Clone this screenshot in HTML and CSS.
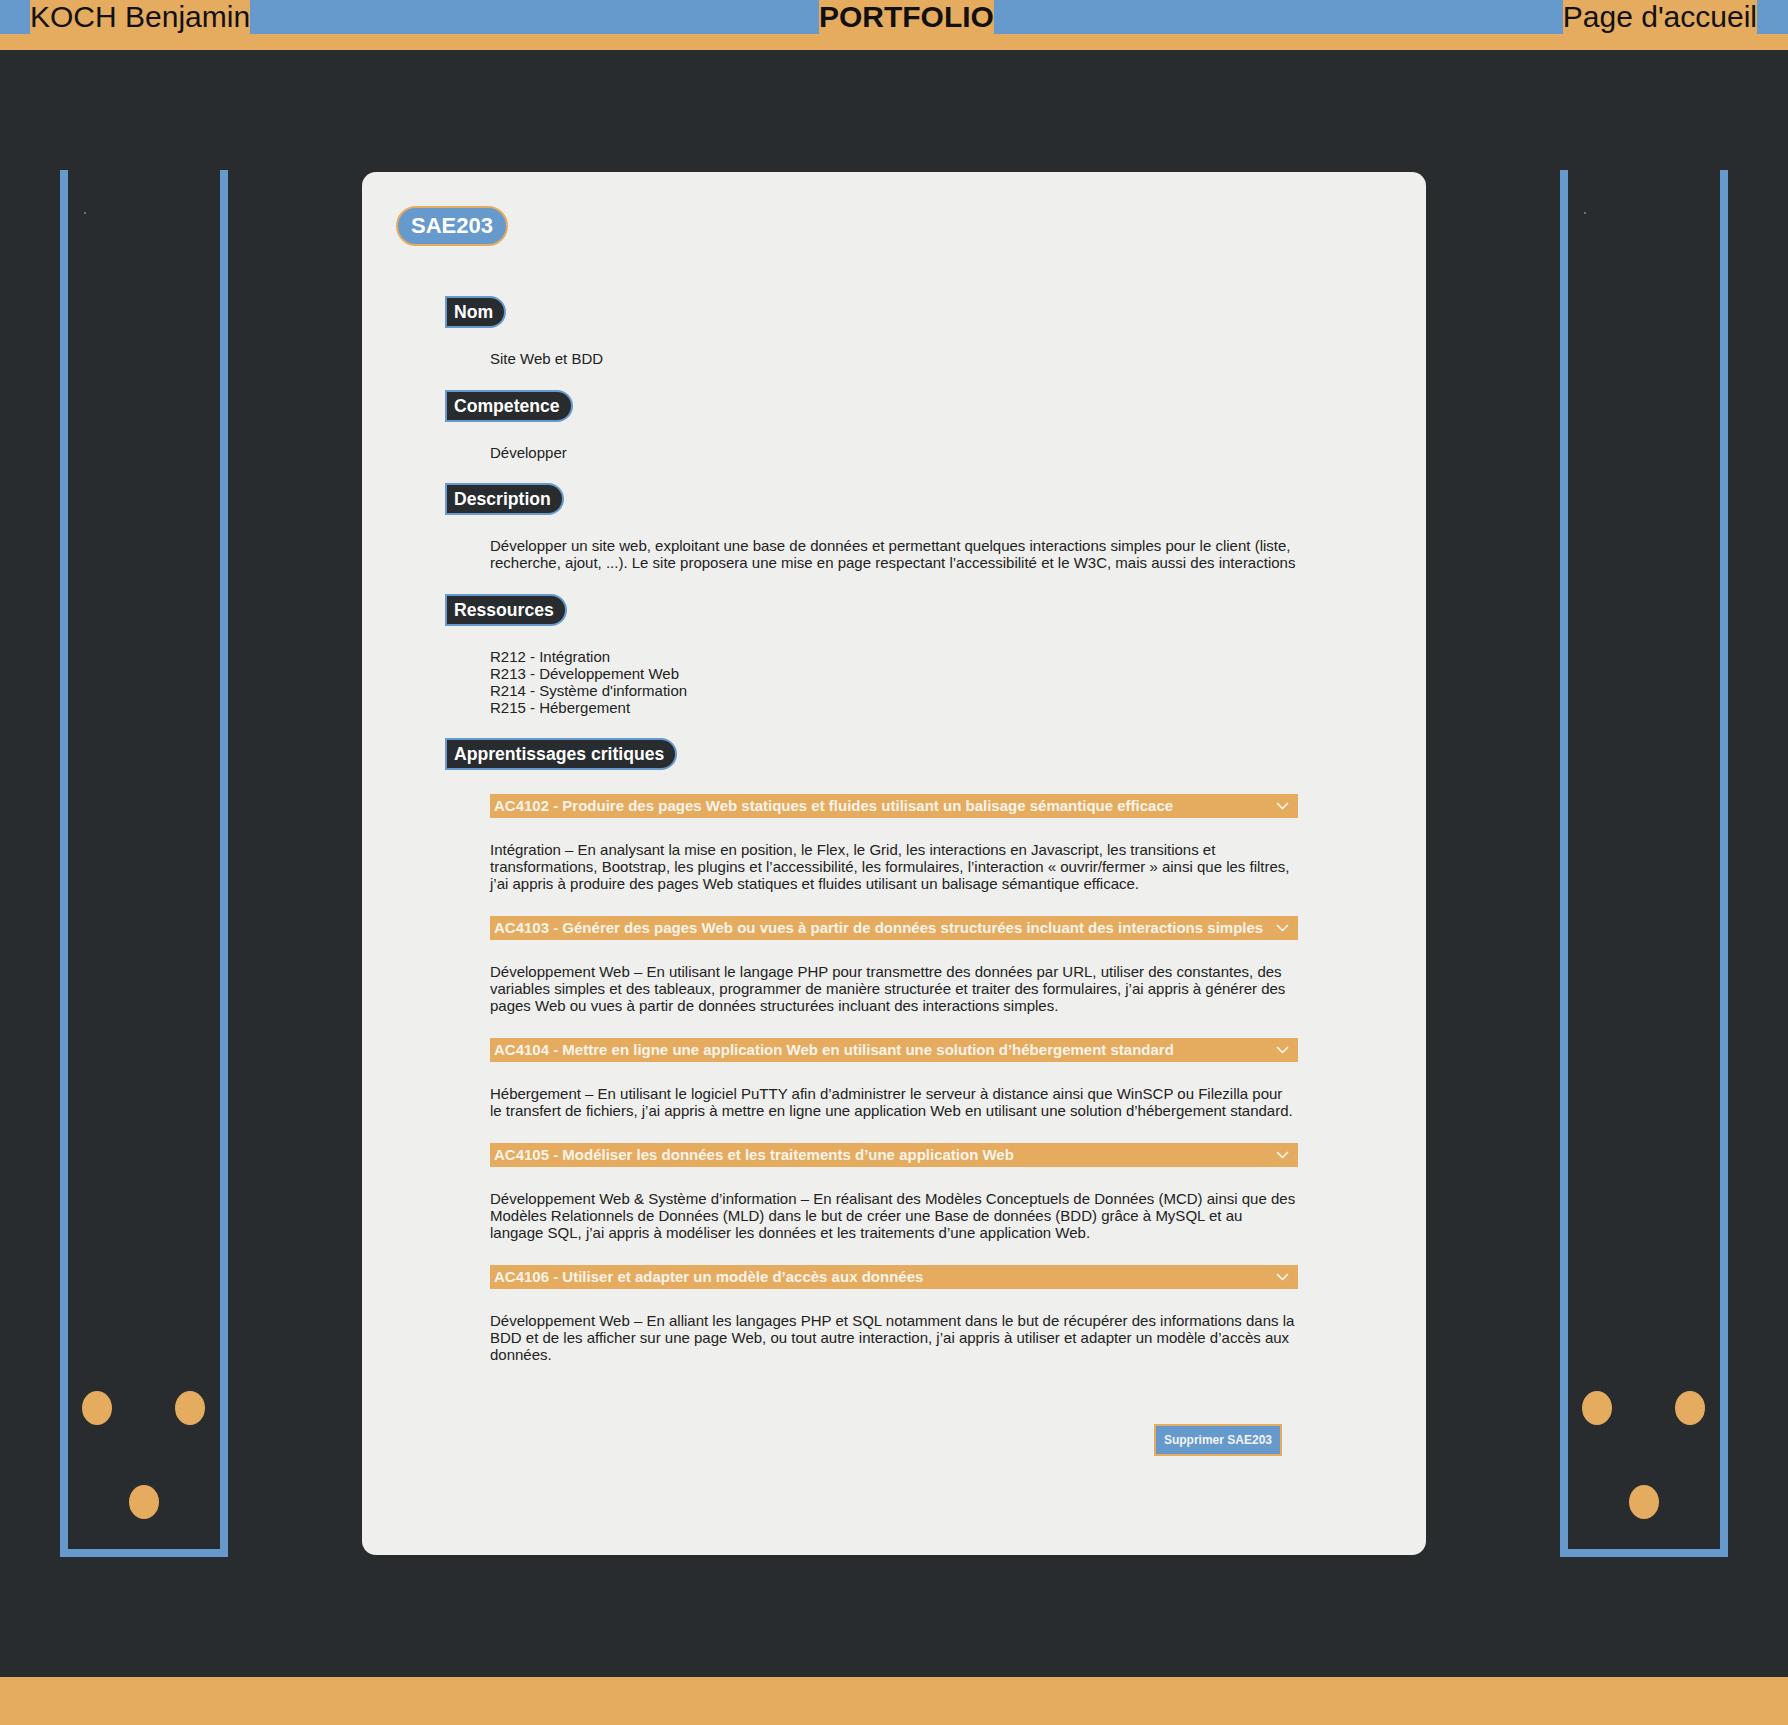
FILE: index.html
```html
<!DOCTYPE html>
<html lang="fr">
<head>
<meta charset="utf-8">
<title>PORTFOLIO - SAE203</title>
<link rel="stylesheet" href="styles.css">
</head>
<body>
<header class="topbar">
  <span class="nav-item">KOCH Benjamin</span>
  <h1 class="nav-item nav-title">PORTFOLIO</h1>
  <a class="nav-item" href="#">Page d'accueil</a>
</header>

<main class="stage">
  <aside class="deco">
    <span class="deco-dot"></span>
    <div class="deco-lights">
      <div class="deco-row"><span class="lamp"></span><span class="lamp"></span></div>
      <div class="deco-row deco-row-single"><span class="lamp"></span></div>
    </div>
  </aside>

  <article class="card">
    <h2 class="pill">SAE203</h2>

    <div class="sections">
      <h3 class="label">Nom</h3>
      <p class="content">Site Web et BDD</p>

      <h3 class="label">Competence</h3>
      <p class="content">Développer</p>

      <h3 class="label">Description</h3>
      <p class="content">Développer un site web, exploitant une base de données et permettant quelques interactions simples pour le client (liste, recherche, ajout, ...). Le site proposera une mise en page respectant l’accessibilité et le W3C, mais aussi des interactions</p>

      <h3 class="label">Ressources</h3>
      <p class="content">R212 - Intégration<br>R213 - Développement Web<br>R214 - Système d'information<br>R215 - Hébergement</p>

      <h3 class="label">Apprentissages critiques</h3>
      <div class="content ac-list">
        <details class="ac" open>
          <summary class="ac-head"><span>AC4102 - Produire des pages Web statiques et fluides utilisant un balisage sémantique efficace</span><svg class="chev" width="13" height="8" viewBox="0 0 13 8"><polyline points="1,1 6.5,6.5 12,1" fill="none" stroke="#fff" stroke-width="1.4"/></svg></summary>
          <p class="ac-text">Intégration – En analysant la mise en position, le Flex, le Grid, les interactions en Javascript, les transitions et transformations, Bootstrap, les plugins et l’accessibilité, les formulaires, l’interaction « ouvrir/fermer » ainsi que les filtres, j’ai appris à produire des pages Web statiques et fluides utilisant un balisage sémantique efficace.</p>
        </details>
        <details class="ac" open>
          <summary class="ac-head"><span>AC4103 - Générer des pages Web ou vues à partir de données structurées incluant des interactions simples</span><svg class="chev" width="13" height="8" viewBox="0 0 13 8"><polyline points="1,1 6.5,6.5 12,1" fill="none" stroke="#fff" stroke-width="1.4"/></svg></summary>
          <p class="ac-text">Développement Web – En utilisant le langage PHP pour transmettre des données par URL, utiliser des constantes, des variables simples et des tableaux, programmer de manière structurée et traiter des formulaires, j’ai appris à générer des pages Web ou vues à partir de données structurées incluant des interactions simples.</p>
        </details>
        <details class="ac" open>
          <summary class="ac-head"><span>AC4104 - Mettre en ligne une application Web en utilisant une solution d’hébergement standard</span><svg class="chev" width="13" height="8" viewBox="0 0 13 8"><polyline points="1,1 6.5,6.5 12,1" fill="none" stroke="#fff" stroke-width="1.4"/></svg></summary>
          <p class="ac-text">Hébergement – En utilisant le logiciel PuTTY afin d’administrer le serveur à distance ainsi que WinSCP ou Filezilla pour le transfert de fichiers, j’ai appris à mettre en ligne une application Web en utilisant une solution d’hébergement standard.</p>
        </details>
        <details class="ac" open>
          <summary class="ac-head"><span>AC4105 - Modéliser les données et les traitements d’une application Web</span><svg class="chev" width="13" height="8" viewBox="0 0 13 8"><polyline points="1,1 6.5,6.5 12,1" fill="none" stroke="#fff" stroke-width="1.4"/></svg></summary>
          <p class="ac-text">Développement Web &amp; Système d’information – En réalisant des Modèles Conceptuels de Données (MCD) ainsi que des Modèles Relationnels de Données (MLD) dans le but de créer une Base de données (BDD) grâce à MySQL et au langage SQL, j’ai appris à modéliser les données et les traitements d’une application Web.</p>
        </details>
        <details class="ac" open>
          <summary class="ac-head"><span>AC4106 - Utiliser et adapter un modèle d’accès aux données</span><svg class="chev" width="13" height="8" viewBox="0 0 13 8"><polyline points="1,1 6.5,6.5 12,1" fill="none" stroke="#fff" stroke-width="1.4"/></svg></summary>
          <p class="ac-text">Développement Web – En alliant les langages PHP et SQL notamment dans le but de récupérer des informations dans la BDD et de les afficher sur une page Web, ou tout autre interaction, j’ai appris à utiliser et adapter un modèle d’accès aux données.</p>
        </details>
      </div>

      <div class="actions">
        <button class="btn-delete" type="button">Supprimer SAE203</button>
      </div>
    </div>
  </article>

  <aside class="deco">
    <span class="deco-dot"></span>
    <div class="deco-lights">
      <div class="deco-row"><span class="lamp"></span><span class="lamp"></span></div>
      <div class="deco-row deco-row-single"><span class="lamp"></span></div>
    </div>
  </aside>
</main>

<footer class="bottombar"></footer>
</body>
</html>
```

FILE: styles.css
```css
* { box-sizing: border-box; }

html, body {
  margin: 0;
  padding: 0;
}

body {
  background: #292c2f;
  font-family: "Liberation Sans", Arial, sans-serif;
  color: #222;
}

/* ---------- Top bar ---------- */
.topbar {
  display: flex;
  justify-content: space-between;
  align-items: flex-start;
  height: 50px;
  padding: 0 31px 0 30px;
  background: linear-gradient(#6699cc, #6699cc) top / 100% 34px no-repeat, #e5ab5f;
}

.nav-item {
  display: block;
  margin: 0;
  font-size: 30px;
  line-height: 34px;
  font-weight: normal;
  color: #111;
  background: #e5ab5f;
  text-decoration: none;
}

.nav-title {
  font-weight: bold;
}

/* ---------- Stage ---------- */
.stage {
  display: flex;
  justify-content: space-between;
  align-items: stretch;
  padding: 120px 60px;
}

.deco {
  width: 168px;
  display: flex;
  flex-direction: column;
  border: 8px solid #6699cc;
  border-top: 0;
}

.deco-dot {
  width: 2px;
  height: 2px;
  margin: 42px 0 0 16px;
  background: #6b6e72;
}

.deco-lights {
  margin-top: auto;
  padding: 0 15px 30px 14px;
  display: flex;
  flex-direction: column;
  gap: 60px;
}

.deco-row {
  display: flex;
  justify-content: space-between;
}

.deco-row-single {
  justify-content: center;
}

.lamp {
  width: 30px;
  height: 34px;
  border-radius: 50%;
  background: #e5ab5f;
}

/* ---------- Card ---------- */
.card {
  width: 1064px;
  margin: 2px 0 2px;
  padding: 34px 128px 99px 34px;
  background: #efefed;
  border-radius: 14px;
}

.pill {
  display: inline-block;
  margin: 0;
  padding: 5px 13px 6px;
  font-size: 22px;
  line-height: 25px;
  font-weight: bold;
  color: #fff;
  background: #6699cc;
  border: 2px solid #e5ab5f;
  border-radius: 22px;
}

.sections {
  margin: 50px 0 0 49px;
}

.label {
  display: table;
  margin: 0 0 22px;
  padding: 4px 11px 4px 7px;
  font-size: 17.6px;
  line-height: 20px;
  font-weight: bold;
  color: #fff;
  background: #292c2f;
  border: 2px solid #6699cc;
  border-radius: 0 18px 18px 0;
}

.content {
  margin: 0 0 22.5px 45px;
  width: 808px;
  font-size: 15px;
  line-height: 17px;
}

/* ---------- Accordion ---------- */
.ac-list {
  margin-top: 24px;
  margin-bottom: 0;
}

.ac-head {
  display: flex;
  justify-content: space-between;
  align-items: center;
  height: 24px;
  padding: 0 9px 0 4px;
  background: #e5ab5f;
  color: #fbf4ea;
  font-size: 15px;
  font-weight: bold;
  line-height: 18px;
  white-space: nowrap;
  cursor: pointer;
  list-style: none;
}

.ac-head::-webkit-details-marker { display: none; }

.chev { flex: none; }

.ac-text {
  margin: 23px 0 24px;
}

.ac:last-child .ac-text {
  margin-bottom: 0;
}

/* ---------- Actions ---------- */
.actions {
  display: flex;
  justify-content: flex-end;
  width: 853px;
  padding-right: 16px;
  margin-top: 61px;
}

.btn-delete {
  height: 32px;
  padding: 0 8px;
  font-family: "Liberation Sans", Arial, sans-serif;
  font-size: 12px;
  font-weight: bold;
  color: #f3f3f3;
  background: #6699cc;
  border: 2px solid #e5ab5f;
  border-radius: 0;
  cursor: pointer;
}

/* ---------- Footer ---------- */
.bottombar {
  height: 48px;
  background: #e5ab5f;
}
```
